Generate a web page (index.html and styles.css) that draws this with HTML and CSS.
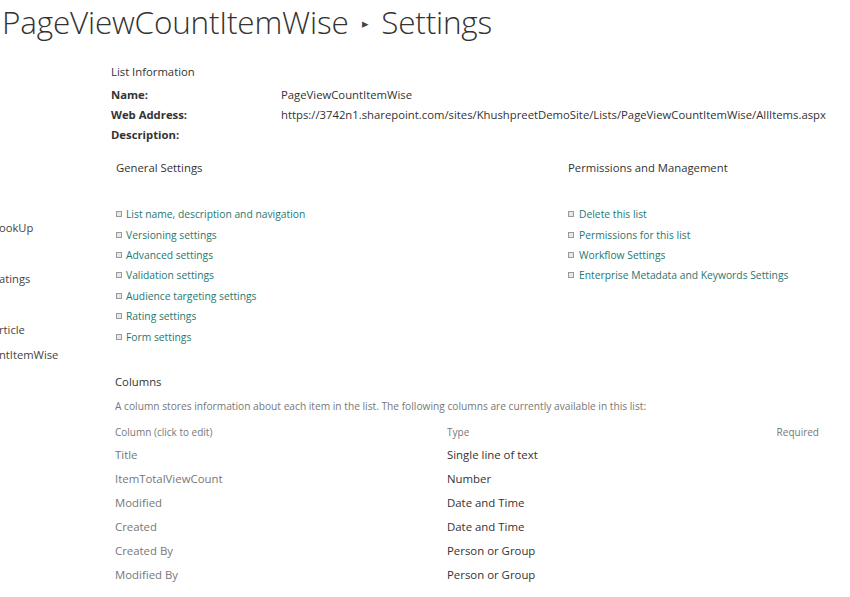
FILE: index.html
```html
<!DOCTYPE html>
<html>
<head>
<meta charset="utf-8">
<link rel="stylesheet" href="styles.css">
</head>
<body>
<h1 class="page-title">PageViewCountItemWise <span class="crumb-sep">&#9656;</span> Settings</h1>
<div class="layout">
  <nav class="side-nav">
    <a class="nav-item nav-first">ookUp</a>
    <a class="nav-item nav-gap">atings</a>
    <a class="nav-item nav-gap">rticle</a>
    <a class="nav-item">ntItemWise</a>
  </nav>
  <main class="content">
    <section class="list-info">
      <div class="section-label">List Information</div>
      <div class="info-row"><span class="info-key">Name:</span><span class="info-val">PageViewCountItemWise</span></div>
      <div class="info-row"><span class="info-key">Web Address:</span><span class="info-val">https://3742n1.sharepoint.com/sites/KhushpreetDemoSite/Lists/PageViewCountItemWise/AllItems.aspx</span></div>
      <div class="info-row"><span class="info-key">Description:</span><span class="info-val"></span></div>
    </section>
    <section class="settings">
      <div class="settings-col col-general">
        <div class="settings-head">General Settings</div>
        <ul class="link-list">
          <li><a>List name, description and navigation</a></li>
          <li><a>Versioning settings</a></li>
          <li><a>Advanced settings</a></li>
          <li><a>Validation settings</a></li>
          <li><a>Audience targeting settings</a></li>
          <li><a>Rating settings</a></li>
          <li><a>Form settings</a></li>
        </ul>
      </div>
      <div class="settings-col col-perm">
        <div class="settings-head">Permissions and Management</div>
        <ul class="link-list">
          <li><a>Delete this list</a></li>
          <li><a>Permissions for this list</a></li>
          <li><a>Workflow Settings</a></li>
          <li><a>Enterprise Metadata and Keywords Settings</a></li>
        </ul>
      </div>
    </section>
    <section class="columns">
      <div class="settings-head">Columns</div>
      <p class="columns-desc">A column stores information about each item in the list. The following columns are currently available in this list:</p>
      <table class="col-table">
        <thead>
          <tr><th class="c-name">Column (click to edit)</th><th class="c-type">Type</th><th class="c-req">Required</th></tr>
        </thead>
        <tbody>
          <tr><td class="c-name">Title</td><td class="c-type">Single line of text</td><td class="c-req"></td></tr>
          <tr><td class="c-name">ItemTotalViewCount</td><td class="c-type">Number</td><td class="c-req"></td></tr>
          <tr><td class="c-name">Modified</td><td class="c-type">Date and Time</td><td class="c-req"></td></tr>
          <tr><td class="c-name">Created</td><td class="c-type">Date and Time</td><td class="c-req"></td></tr>
          <tr><td class="c-name">Created By</td><td class="c-type">Person or Group</td><td class="c-req"></td></tr>
          <tr><td class="c-name">Modified By</td><td class="c-type">Person or Group</td><td class="c-req"></td></tr>
        </tbody>
      </table>
    </section>
  </main>
</div>
</body>
</html>
```
FILE: styles.css
```css
html, body {
  margin: 0;
  padding: 0;
  background: #ffffff;
}
body {
  font-family: "Open Sans", "Noto Sans", sans-serif;
  color: #444444;
  font-size: 12px;
  overflow: hidden;
  width: 850px;
  height: 597px;
}
.page-title {
  margin: 0;
  padding: 0 0 0 2px;
  height: 46px;
  line-height: 43px;
  font-size: 31.5px;
  font-weight: 300;
  color: #333333;
  white-space: nowrap;
  letter-spacing: -0.2px;
}
.crumb-sep {
  font-size: 13px;
  vertical-align: 6px;
  color: #444;
  margin: 0 4px 0 6px;
}
.layout {
  display: grid;
  grid-template-columns: 111px 1fr;
}
.side-nav {
  display: flex;
  flex-direction: column;
  padding-top: 173px;
  font-size: 11.2px;
  color: #444444;
}
.nav-item {
  display: block;
  line-height: 18px;
  height: 18px;
  margin-left: -1px;
  white-space: nowrap;
}
.nav-gap {
  margin-top: 33px;
}
.nav-item:last-child {
  margin-top: 7px;
}
.content {
  display: flex;
  flex-direction: column;
  padding-top: 17px;
}
.section-label {
  font-size: 11.3px;
  line-height: 18px;
  color: #333;
  margin-bottom: 4px;
}
.info-row {
  display: flex;
  line-height: 20px;
  height: 20px;
  font-size: 11.3px;
  color: #333;
}
.info-key {
  width: 170px;
  font-weight: 700;
  flex: none;
}
.info-val {
  white-space: nowrap;
}
.settings {
  display: grid;
  grid-template-columns: 452px 1fr;
  padding-left: 5px;
  margin-top: 14px;
}
.settings-head {
  font-size: 11.3px;
  line-height: 18px;
  color: #333;
}
.link-list {
  list-style: none;
  margin: 27px 0 0 0;
  padding: 0;
}
.link-list li {
  display: flex;
  align-items: center;
  height: 20.4px;
  font-size: 10.3px;
  white-space: nowrap;
}
.link-list li::before {
  content: "";
  width: 4px;
  height: 4px;
  border: 1px solid #9a9a9a;
  background: #e8e8e8;
  margin-right: 4px;
  flex: none;
}
.col-perm .link-list li::before {
  margin-right: 5px;
}
.link-list a {
  color: #1f7770;
}
.columns {
  padding-left: 4px;
  margin-top: 26px;
}
.columns-desc {
  margin: 6px 0 0 0;
  font-size: 10.2px;
  line-height: 18px;
  color: #777;
  white-space: nowrap;
}
.col-table {
  border-collapse: collapse;
  width: 704px;
  margin-top: 8px;
}
.col-table th {
  font-weight: 400;
  font-size: 10px;
  color: #777;
  height: 18px;
  line-height: 18px;
  padding: 0;
  text-align: left;
  padding-bottom: 2px;
}
.col-table td {
  height: 24px;
  line-height: 24px;
  padding: 0;
  font-size: 11.4px;
}
.col-table .c-name {
  width: 332px;
  color: #777;
}
.col-table td.c-type {
  color: #333;
}
.col-table .c-req {
  text-align: right;
}
```
